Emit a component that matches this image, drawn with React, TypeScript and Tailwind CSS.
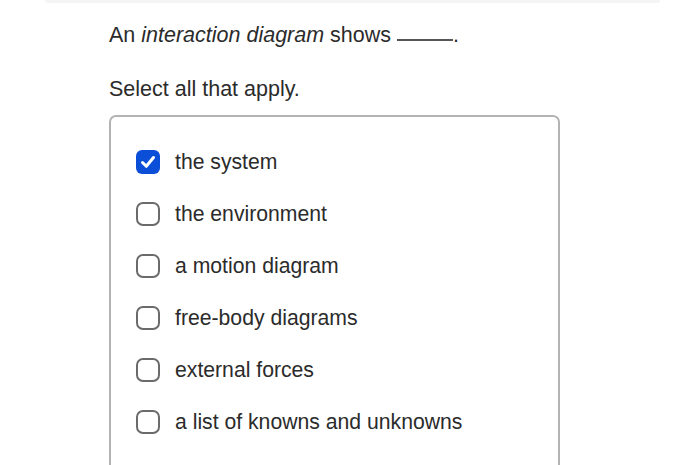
import React from "react";

const options = [
  { label: "the system", checked: true },
  { label: "the environment", checked: false },
  { label: "a motion diagram", checked: false },
  { label: "free-body diagrams", checked: false },
  { label: "external forces", checked: false },
  { label: "a list of knowns and unknowns", checked: false },
];

function Box({ checked }: { checked: boolean }) {
  if (checked) {
    return (
      <div className="w-[24px] h-[24px] rounded-[6px] bg-[#0b4fd9] flex items-center justify-center shrink-0">
        <svg width="18" height="18" viewBox="0 0 18 18" fill="none">
          <path d="M3.5 9.5 L7.3 13.3 L14.5 4.5" stroke="white" strokeWidth="3" strokeLinecap="round" strokeLinejoin="round" />
        </svg>
      </div>
    );
  }
  return <div className="w-[24px] h-[24px] rounded-[7px] border-2 border-[#6b6b6b] bg-white shrink-0" />;
}

export default function App() {
  return (
    <div
      className="w-[700px] h-[465px] bg-white overflow-hidden text-[#2b2b2b]"
      style={{ fontFamily: '"Liberation Sans", Arial, sans-serif' }}
    >
      <div className="mx-[45px] w-[615px] h-[3px] bg-[#f4f4f4] rounded-b-[3px]" />
      <div className="pl-[109px]">
        <div className="mt-[20px] text-[21.5px] leading-[24px]">
          An <i>interaction diagram</i> shows{" "}
          <span className="inline-block w-[56px] border-b-[2px] border-[#555] align-baseline translate-y-[-1px]" />.
        </div>
        <div className="mt-[30px] text-[21.5px] leading-[24px]">Select all that apply.</div>
        <div className="mt-[14px] w-[451px] border-2 border-[#b3b3b3] rounded-[7px] pt-[33px] pl-[25px] pb-[60px] flex flex-col gap-[28px]">
          {options.map((o) => (
            <div key={o.label} className="flex items-center gap-[15px] h-[24px]">
              <Box checked={o.checked} />
              <span className="text-[21.2px] leading-[24px]">{o.label}</span>
            </div>
          ))}
        </div>
      </div>
    </div>
  );
}
